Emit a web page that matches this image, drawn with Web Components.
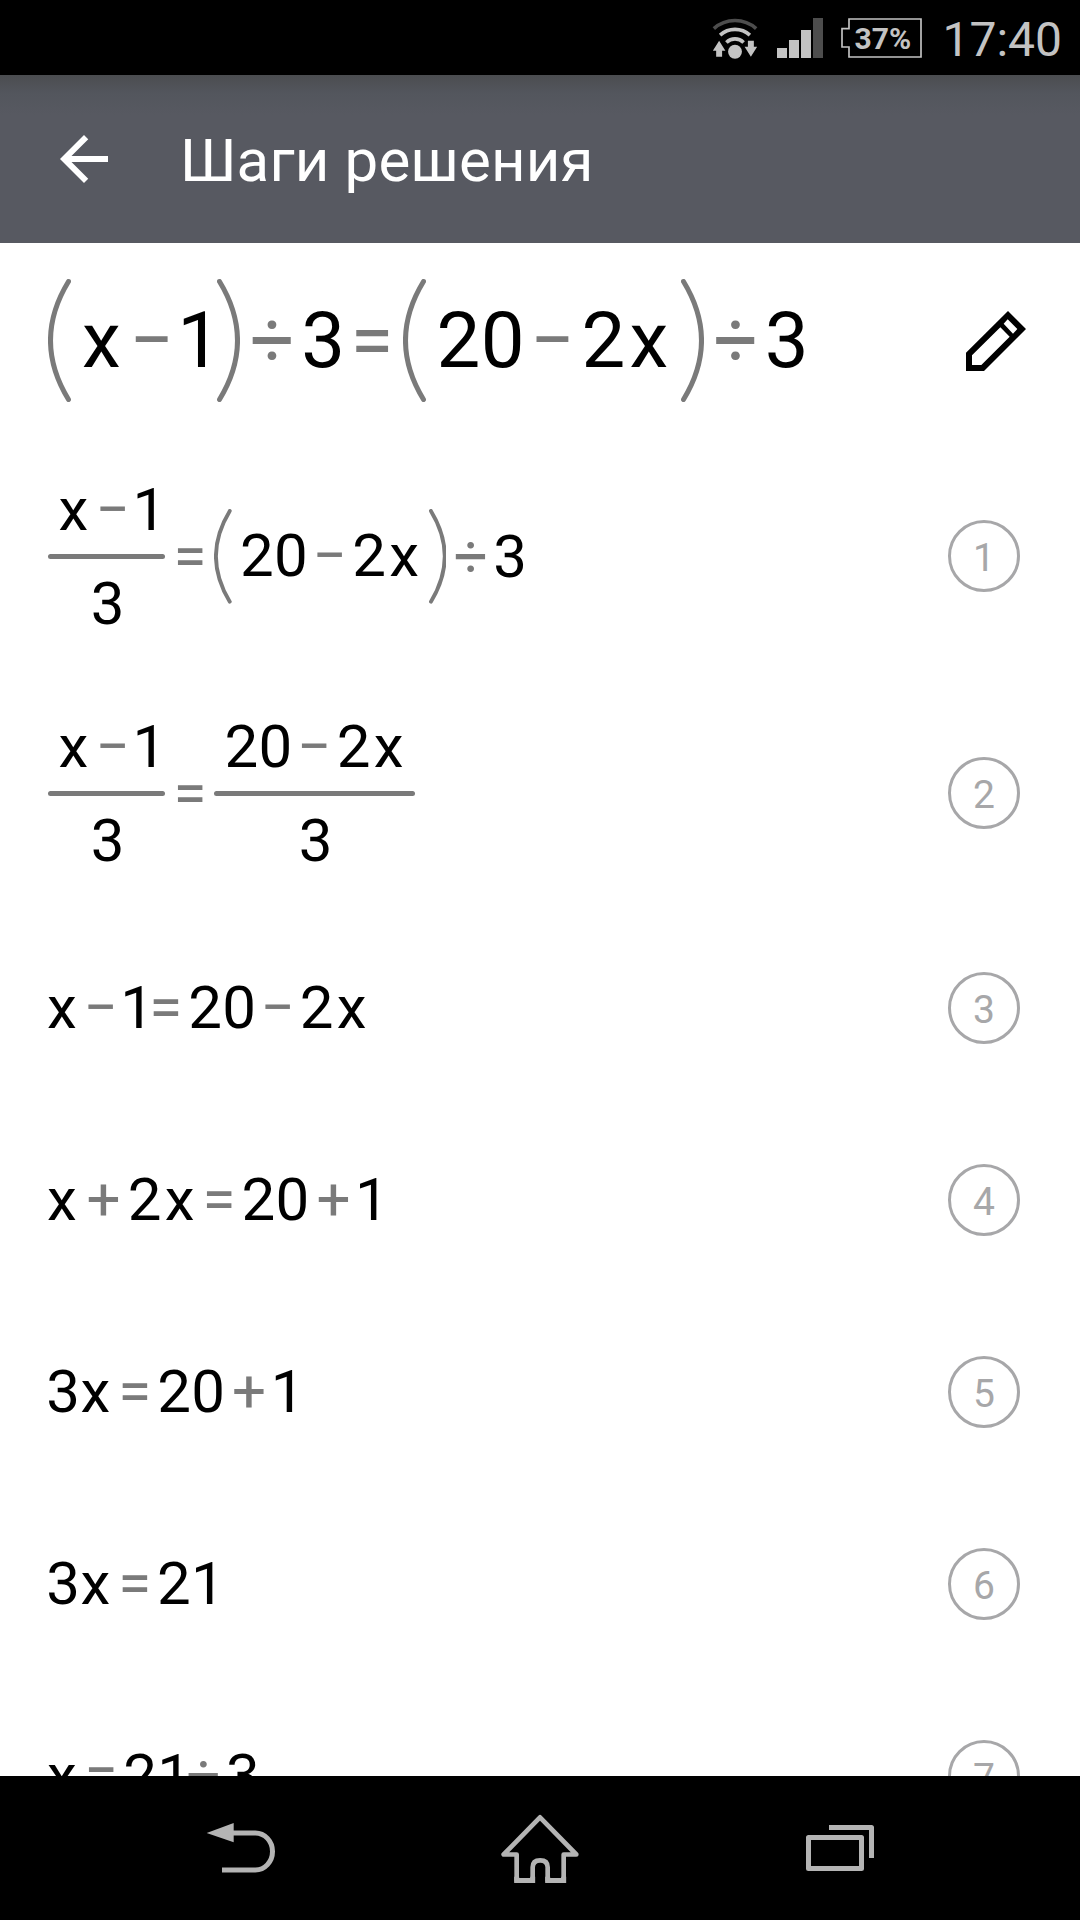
<!DOCTYPE html>
<html lang="ru">
<head>
<meta charset="utf-8">
<title>Шаги решения</title>
<style>
  html, body {
    margin: 0;
    height: 100%;
  }
  body {
    background: #fff;
    color: #000;
    font-family: Roboto, "Noto Sans", sans-serif;
    overflow: hidden;
  }
</style>
</head>
<body>
<app-screen>
  <status-bar slot="status" time="17:40" battery="37%"></status-bar>
  <app-bar slot="bar">Шаги решения</app-bar>

  <problem-row>
    <math-paren><math-num>x</math-num><math-op>−</math-op><math-num>1</math-num></math-paren><math-op narrow>÷</math-op><math-num>3</math-num><math-op>=</math-op><math-paren><math-num>20</math-num><math-op>−</math-op><math-num>2</math-num><math-num>x</math-num></math-paren><math-op narrow>÷</math-op><math-num>3</math-num>
  </problem-row>

  <step-row number="1" tall>
    <math-frac><math-num>x</math-num><math-op>−</math-op><math-num>1</math-num><math-num slot="den">3</math-num></math-frac><math-op>=</math-op><math-paren><math-num>20</math-num><math-op>−</math-op><math-num>2</math-num><math-num>x</math-num></math-paren><math-op narrow>÷</math-op><math-num>3</math-num>
  </step-row>

  <step-row number="2" tall>
    <math-frac><math-num>x</math-num><math-op>−</math-op><math-num>1</math-num><math-num slot="den">3</math-num></math-frac><math-op>=</math-op><math-frac><math-num>20</math-num><math-op>−</math-op><math-num>2</math-num><math-num>x</math-num><math-num slot="den">3</math-num></math-frac>
  </step-row>

  <step-row number="3">
    <math-num>x</math-num><math-op>−</math-op><math-num>1</math-num><math-op>=</math-op><math-num>20</math-num><math-op>−</math-op><math-num>2</math-num><math-num>x</math-num>
  </step-row>

  <step-row number="4">
    <math-num>x</math-num><math-op>+</math-op><math-num>2</math-num><math-num>x</math-num><math-op>=</math-op><math-num>20</math-num><math-op>+</math-op><math-num>1</math-num>
  </step-row>

  <step-row number="5">
    <math-num>3</math-num><math-num>x</math-num><math-op>=</math-op><math-num>20</math-num><math-op>+</math-op><math-num>1</math-num>
  </step-row>

  <step-row number="6">
    <math-num>3</math-num><math-num>x</math-num><math-op>=</math-op><math-num>21</math-num>
  </step-row>

  <step-row number="7">
    <math-num>x</math-num><math-op>=</math-op><math-num>21</math-num><math-op narrow>÷</math-op><math-num>3</math-num>
  </step-row>

  <nav-bar slot="nav"></nav-bar>
</app-screen>

<script>
  const pen = document.createElement("canvas").getContext("2d");

  // Box widths in em
  const widths = {
    "x": 0.444,
    "1": 0.254,
    "2": 0.472,
    "3": 0.45,
    "20": 1.042,
    "21": 0.878,
    "−": 0.412,
    "=": 0.412,
    "+": 0.492,
    "÷": 0.489
  };

  class BaseElement extends HTMLElement {
    constructor() {
      super();
      this.attachShadow({ mode: "open" });
      this.shadowRoot.innerHTML = this.getTemplate();
    }
  }

  // Centres the ink of a glyph run in its box.
  // Measured large, as the ink bounds come back in whole pixels.
  class InkElement extends BaseElement {
    connectedCallback() {
      const text = this.textContent.trim();
      pen.font = "1000px Roboto";
      const box = pen.measureText(text);
      const left = -box.actualBoundingBoxLeft / 1000;
      const right = box.actualBoundingBoxRight / 1000;
      const ink = right - left + 0.005 * (text.length - 1);
      const width = widths[text] || ink;
      this.style.width = `${width}em`;
      this.style.textIndent = `${(width - ink) / 2 - left}em`;
    }
  }

  class MathNum extends InkElement {
    getTemplate() {
      return `
        <style>
          :host {
            display: block;
            flex: none;
            margin: 0 .01em;
            line-height: 1.166667em;
            letter-spacing: .005em;
            white-space: nowrap;
          }
        </style>
        <slot></slot>
      `;
    }
    connectedCallback() {
      super.connectedCallback();
      const prev = this.previousElementSibling;
      if (this.textContent === "x") {
        this.style.marginRight = ".026em";
      }
      if (!this.slot && prev && prev.localName === "math-num") {
        this.style.marginLeft = prev.textContent === "3" ? ".1em" : ".118em";
      }
    }
  }

  class MathOp extends InkElement {
    getTemplate() {
      return `
        <style>
          :host {
            display: block;
            flex: none;
            margin: 0 var(--op-gap, .197em);
            line-height: 1.166667em;
            color: #7a7a7a;
            white-space: nowrap;
          }
          :host([narrow]) { margin: 0 .163em; }
        </style>
        <slot></slot>
      `;
    }
  }

  class MathParen extends BaseElement {
    getTemplate() {
      return `
        <style>
          :host {
            display: flex;
            flex: none;
            align-items: center;
            gap: .158em;
          }
          svg {
            flex: none;
            width: .295em;
            height: 1.577em;
            fill: none;
            stroke: #7a7a7a;
            stroke-width: 5;
            stroke-linecap: round;
          }
          div {
            display: flex;
            align-items: center;
          }
        </style>
        <svg viewBox="0 0 23 123"><path d="M20.5 2.5Q-15.5 61.5 20.5 120.5"/></svg>
        <div><slot></slot></div>
        <svg viewBox="0 0 23 123"><path d="M2.5 2.5Q38.5 61.5 2.5 120.5"/></svg>
      `;
    }
  }

  class MathFrac extends BaseElement {
    getTemplate() {
      return `
        <style>
          :host {
            display: flex;
            flex: none;
            flex-direction: column;
            align-items: stretch;
            gap: 9px;
          }
          div {
            display: flex;
            justify-content: center;
            padding: 1px .193em 0;
          }
          hr {
            width: 100%;
            height: 5px;
            margin: 0;
            border: 0;
            border-radius: 2.5px;
            background: #7a7a7a;
          }
        </style>
        <div><slot></slot></div>
        <hr>
        <div><slot name="den"></slot></div>
      `;
    }
  }

  class StepRow extends BaseElement {
    getTemplate() {
      return `
        <style>
          :host {
            display: flex;
            flex: none;
            box-sizing: border-box;
            align-items: center;
            justify-content: space-between;
            height: 192px;
            padding: 0 60px 0 48px;
            font-size: 60px;
          }
          :host([tall]) {
            --op-gap: .203em;
            height: 237px;
          }
          .expr {
            display: flex;
            align-items: center;
          }
          .badge {
            display: flex;
            box-sizing: border-box;
            align-items: center;
            justify-content: center;
            width: 72px;
            height: 72px;
            padding-top: 3px;
            border: 3px solid #a7a7a9;
            border-radius: 50%;
            color: #a7a7a9;
            font-size: 39px;
            line-height: 46px;
          }
          :host([tall]) .badge { margin-bottom: 1px; }
        </style>
        <div class="expr"><slot></slot></div>
        <div class="badge"></div>
      `;
    }
    connectedCallback() {
      this.shadowRoot.querySelector(".badge").textContent = this.getAttribute("number");
    }
  }

  class ProblemRow extends BaseElement {
    getTemplate() {
      return `
        <style>
          :host {
            display: flex;
            flex: none;
            box-sizing: border-box;
            align-items: center;
            justify-content: space-between;
            height: 195px;
            padding: 0 54px 0 48px;
            font-size: 78px;
          }
          .expr {
            display: flex;
            align-items: center;
          }
          svg {
            width: 60px;
            height: 60px;
          }
        </style>
        <div class="expr"><slot></slot></div>
        <svg viewBox="138 90 180 180"><path fill-rule="evenodd" d="M264 90l54 54-126 126h-54v-55zM241 139l-85 84v29h28l85-85zM263 115l-12 13 28 30 13-14z"/></svg>
      `;
    }
  }

  class StatusBar extends BaseElement {
    getTemplate() {
      return `
        <style>
          :host {
            display: flex;
            flex: none;
            box-sizing: border-box;
            align-items: center;
            justify-content: flex-end;
            height: 75px;
            padding-right: 18px;
            background: #000;
            color: #c3c3c3;
          }
          svg {
            display: block;
            fill: #c3c3c3;
          }
          .wifi { margin-right: 19px; }
          .signal { margin: 1px 18px 0 0; }
          .battery {
            display: grid;
            align-items: center;
            margin-right: 20px;
          }
          .battery > * { grid-area: 1 / 1; }
          .battery svg {
            fill: none;
            stroke: #c3c3c3;
            stroke-width: 5;
          }
          .level {
            padding: 3px 0 0 13px;
            font-size: 30px;
            font-weight: 700;
            line-height: 36px;
          }
          .clock {
            padding-top: 4px;
            font-size: 48px;
            line-height: 56px;
          }
        </style>
        <svg class="wifi" width="46" height="42" viewBox="36 48 138 127">
          <g fill="none" stroke="#c3c3c3" stroke-width="11">
            <path stroke="#4d4d4d" d="M41 83A96 96 0 0 1 169 83"/>
            <path d="M60 103A66 66 0 0 1 150 103"/>
            <path d="M79 125A37 37 0 0 1 131 125"/>
          </g>
          <circle cx="105" cy="153" r="21"/>
          <path d="M57 120l19 30H66v18H48v-18H38zM144 120h18v18h10l-19 30-19-30h10z"/>
        </svg>
        <svg class="signal" width="46" height="40" viewBox="0 0 46 40">
          <path d="M0 30h10v10H0zM12 22h10v18H12zM24 12h10v28H24z"/>
          <path fill="#4d4d4d" d="M36 0h10v40H36z"/>
        </svg>
        <div class="battery">
          <svg width="81" height="40" viewBox="423 51 243 120"><path d="M447 54h216v114H447v-30h-21V83h21z"/></svg>
          <span class="level"></span>
        </div>
        <span class="clock"></span>
      `;
    }
    connectedCallback() {
      this.shadowRoot.querySelector(".level").textContent = this.getAttribute("battery");
      this.shadowRoot.querySelector(".clock").textContent = this.getAttribute("time");
    }
  }

  class AppBar extends BaseElement {
    getTemplate() {
      return `
        <style>
          :host {
            display: flex;
            flex: none;
            box-sizing: border-box;
            align-items: center;
            gap: 60px;
            height: 168px;
            padding-left: 48px;
            background: linear-gradient(#4b4d50, #53565d 18px, #575961 40px);
            color: #fff;
            font-size: 60px;
            letter-spacing: .15px;
            line-height: 70px;
          }
          svg {
            width: 72px;
            height: 72px;
            fill: #fff;
          }
          span { padding-top: 4px; }
        </style>
        <svg viewBox="0 0 24 24"><path d="M20 11H7.83l5.59-5.59L12 4l-8 8 8 8 1.41-1.41L7.83 13H20z"/></svg>
        <span><slot></slot></span>
      `;
    }
  }

  class NavBar extends BaseElement {
    getTemplate() {
      return `
        <style>
          :host {
            display: flex;
            flex: none;
            box-sizing: border-box;
            height: 144px;
            padding: 0 90px;
            background: #000;
          }
          div {
            display: flex;
            flex: 1;
            align-items: center;
            justify-content: center;
          }
          svg {
            fill: none;
            stroke: #b4b4b4;
            stroke-width: 15;
          }
        </style>
        <div><svg width="69" height="50" viewBox="528 311 207 150"><path d="M608 341H676A51.500 55.500 0 0 1 676 452H576"/><path fill="#b4b4b4" stroke="none" d="M530 341l81-30v58z"/></svg></div>
        <div><svg width="78" height="69" viewBox="63 102 234 207"><path stroke-linejoin="round" stroke-width="14" d="M180 112L71 223.500H110V301.500H158V262Q158 241 180.500 241T203 262V301.500H251V223.500H289Z"/><path stroke-linejoin="miter" d="M110 290V301.500H158V290M203 290V301.500H251V290"/></svg></div>
        <div><svg width="68" height="46" viewBox="978 135 204 138"><path stroke-linejoin="round" d="M985.500 172.500h159v93h-159zM1047 142.500h127.500V234"/></svg></div>
      `;
    }
  }

  class AppScreen extends BaseElement {
    getTemplate() {
      return `
        <style>
          :host {
            display: flex;
            flex-direction: column;
            width: 1080px;
            height: 1920px;
          }
          main {
            display: flex;
            flex: 1;
            flex-direction: column;
            min-height: 0;
            overflow: hidden;
            background: #fff;
          }
        </style>
        <slot name="status"></slot>
        <slot name="bar"></slot>
        <main><slot></slot></main>
        <slot name="nav"></slot>
      `;
    }
  }

  customElements.define("app-screen", AppScreen);
  customElements.define("status-bar", StatusBar);
  customElements.define("app-bar", AppBar);
  customElements.define("nav-bar", NavBar);
  customElements.define("problem-row", ProblemRow);
  customElements.define("step-row", StepRow);
  customElements.define("math-frac", MathFrac);
  customElements.define("math-paren", MathParen);
  customElements.define("math-op", MathOp);
  customElements.define("math-num", MathNum);
</script>
</body>
</html>
